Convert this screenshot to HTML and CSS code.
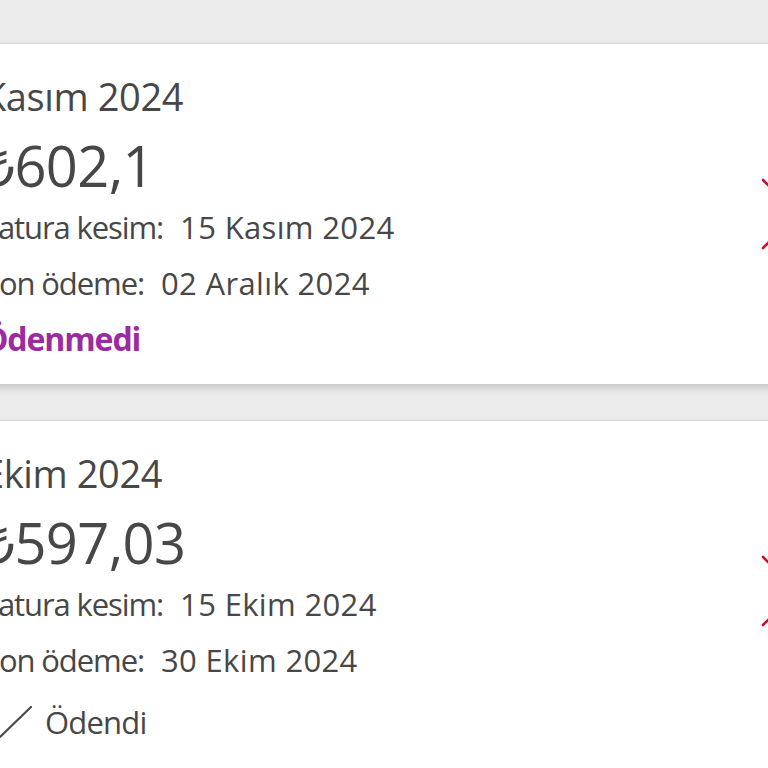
FILE: index.html
```html
<!DOCTYPE html>
<html lang="tr">
<head>
<meta charset="utf-8">
<title>Faturalar</title>
<link rel="stylesheet" href="styles.css">
</head>
<body>
<div class="list">
  <div class="card">
    <div class="info">
      <div class="period">Kasım 2024</div>
      <div class="amount">₺602,1</div>
      <div class="detail"><span class="label">Fatura kesim:</span><span class="value">15 Kasım 2024</span></div>
      <div class="detail"><span class="label">Son ödeme:</span><span class="value">02 Aralık 2024</span></div>
      <div class="status unpaid">Ödenmedi</div>
    </div>
    <svg class="chevron" width="40" height="72" viewBox="0 0 40 72"><polyline points="2,2 36,36 2,70" fill="none" stroke="#c8102e" stroke-width="2.6" stroke-linecap="round" stroke-linejoin="round"/></svg>
  </div>
  <div class="card card-last">
    <div class="info">
      <div class="period">Ekim 2024</div>
      <div class="amount">₺597,03</div>
      <div class="detail"><span class="label">Fatura kesim:</span><span class="value">15 Ekim 2024</span></div>
      <div class="detail"><span class="label">Son ödeme:</span><span class="value">30 Ekim 2024</span></div>
      <div class="status paid">
        <svg class="check" width="50" height="40" viewBox="0 0 50 40"><polyline points="3,20 17,35 48,5" fill="none" stroke="#4a4a4a" stroke-width="2.2" stroke-linecap="round" stroke-linejoin="round"/></svg>
        <span>Ödendi</span>
      </div>
    </div>
    <svg class="chevron" width="40" height="72" viewBox="0 0 40 72"><polyline points="2,2 36,36 2,70" fill="none" stroke="#c8102e" stroke-width="2.6" stroke-linecap="round" stroke-linejoin="round"/></svg>
  </div>
</div>
</body>
</html>
```
FILE: styles.css
```css
html, body {
  margin: 0;
  padding: 0;
}
body {
  background: #ffffff;
  overflow: hidden;
  width: 768px;
  height: 768px;
  font-family: "Open Sans", "Noto Sans", sans-serif;
  color: #474747;
}
.list {
  background: #ebebeb;
  padding-top: 44px;
  display: flex;
  flex-direction: column;
  gap: 37px;
}
.card {
  margin-left: -33px;
  width: 850px;
  height: 340px;
  box-sizing: border-box;
  background: #ffffff;
  padding: 0 16px 0 16px;
  display: flex;
  align-items: flex-start;
  justify-content: space-between;
  box-shadow: 0 -1px 1px rgba(0,0,0,0.06), 0 4px 8px rgba(0,0,0,0.16);
}
.card-last {
  height: 380px;
}
.info {
  padding-top: 29px;
  display: flex;
  flex-direction: column;
}
.period {
  font-size: 38px;
  line-height: 46px;
  letter-spacing: -0.4px;
  white-space: nowrap;
}
.amount {
  font-size: 56px;
  line-height: 68px;
  margin-top: 12px;
  letter-spacing: -0.6px;
  white-space: nowrap;
}
.detail {
  font-size: 31px;
  line-height: 56px;
  white-space: nowrap;
}
.label {
  letter-spacing: -1.1px;
}
.value {
  margin-left: 17px;
  letter-spacing: 0.35px;
}
.status {
  font-size: 32px;
  line-height: 56px;
  white-space: nowrap;
}
.unpaid {
  color: #9c2aa0;
  font-weight: 700;
  letter-spacing: -1.1px;
}
.paid {
  margin-top: 6px;
  display: flex;
  align-items: center;
  gap: 12px;
  font-size: 31px;
  letter-spacing: -0.8px;
}
.check {
  display: block;
  flex: none;
}
.chevron {
  display: block;
  flex: none;
  margin-top: 134px;
}
```
